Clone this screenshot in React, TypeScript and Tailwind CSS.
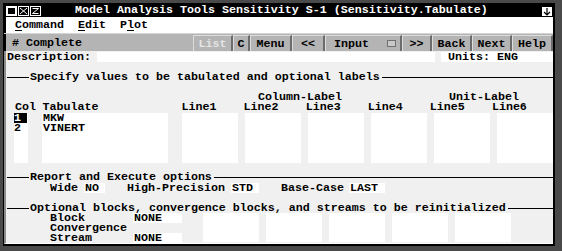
import React from "react";

const mono = "font-['Liberation_Mono',monospace] font-bold text-[11.67px] leading-[10px]";

interface BtnProps {
  label: string;
  w: string;
  disabled?: boolean;
  box?: boolean;
}

const Btn = ({ label, w, disabled, box }: BtnProps) => (
  <div
    className={`h-full flex items-center bg-[#b4b4b4] border-l border-t border-l-[#dcdcdc] border-t-[#dcdcdc] border-r-2 border-r-[#6c6c6c] ${box ? "justify-start pl-[8px]" : "justify-center"} ${w} ${disabled ? "text-[#e4e4e4]" : "text-black"}`}
  >
    <span>{label}</span>
    {box && <span className="ml-auto mr-[4px] w-[9px] h-[7px] border border-[#707070] bg-[#c8c8c8]" />}
  </div>
);

const Section = ({ title, className }: { title: string; className?: string }) => (
  <div className={`flex items-center h-[10px] ${className ?? ""}`}>
    <div className="w-[22px] h-px bg-black" />
    <span className="pl-px pr-[2px]">{title}</span>
    <div className="flex-1 h-px bg-black" />
  </div>
);

const Field = ({ text, className }: { text?: string; className: string }) => (
  <div className={`h-[10px] bg-white pl-px ${className}`}>{text}</div>
);

export default function App() {
  const lines = ["Line1", "Line2", "Line3", "Line4", "Line5", "Line6"];

  return (
    <div className={`w-[562px] h-[251px] bg-[#4a4a4a] pt-[3px] pl-[3px] overflow-hidden ${mono}`}>
      <div className="w-[552px] h-[243px] flex flex-col border-l border-black border-r-2 border-b-2 bg-black">
        {/* title bar */}
        <div className="h-[14px] bg-black flex items-end text-white">
          <div className="flex items-end h-full pb-px pl-[2px] gap-px">
            <svg width="11" height="10" viewBox="0 0 11 10">
              <rect x="0" y="0" width="11" height="10" fill="white" />
              <rect x="2" y="2" width="7" height="6" fill="black" />
            </svg>
            <svg width="11" height="10" viewBox="0 0 11 10">
              <rect x="0.5" y="0.5" width="10" height="9" fill="black" stroke="white" />
              <path d="M2 2 L9 8 M9 2 L2 8" stroke="white" strokeWidth="1" />
            </svg>
            <svg width="11" height="10" viewBox="0 0 11 10">
              <rect x="0.5" y="0.5" width="10" height="9" fill="black" stroke="white" />
              <path d="M2.5 2.5 H8.5 L2.5 7.5 H8.5" stroke="white" strokeWidth="1" fill="none" />
            </svg>
          </div>
          <span className="ml-[34px] pb-[2px]">Model Analysis Tools Sensitivity S-1 (Sensitivity.Tabulate)</span>
          <div className="ml-auto mr-[1px] mb-[1px] w-[10px] h-[9px] bg-white flex items-center justify-center">
            <svg width="8" height="8" viewBox="0 0 8 8">
              <path d="M4 0 V7 M1 4 L4 7 L7 4" stroke="black" strokeWidth="1.2" fill="none" />
            </svg>
          </div>
        </div>

        {/* menu bar */}
        <div className="h-[16px] bg-white flex items-center pl-[9px] border-l-2 border-black text-black">
          <span><span className="underline underline-offset-2">C</span>ommand</span>
          <span className="ml-[14px]"><span className="underline underline-offset-2">E</span>dit</span>
          <span className="ml-[14px]">P<span className="underline underline-offset-2">l</span>ot</span>
        </div>
        <div className="h-px bg-[#d4d4d4]" />

        {/* toolbar */}
        <div className="h-[17px] bg-[#b4b4b4] flex items-stretch border-l-2 border-black">
          <span className="pl-[6px] self-center">{"# Complete"}</span>
          <div className="ml-auto flex h-full pt-px">
            <Btn label="List" w="w-[40px]" disabled />
            <Btn label="C" w="w-[17px]" />
            <Btn label="Menu" w="w-[42px]" />
            <Btn label="<<" w="w-[33px]" />
            <Btn label="Input" w="w-[77px]" box />
            <Btn label=">>" w="w-[30px]" />
            <Btn label="Back" w="w-[40px]" />
            <Btn label="Next" w="w-[40px]" />
            <Btn label="Help" w="w-[41px]" />
          </div>
        </div>

        {/* content */}
        <div className="flex-1 bg-[#f0f0f0] border-l-2 border-l-[#8c8c8c] border-b border-b-white pl-px text-black flex flex-col">
          <div className="mt-px h-[10px] flex">
            <span>Description:</span>
            <div className="ml-[6px] w-[338px] bg-white" />
            <div className="ml-[6px] flex-1 bg-white pl-[7px]">Units: ENG</div>
          </div>

          <Section title="Specify values to be tabulated and optional labels" className="mt-[10px]" />

          <div className="mt-[10px] h-[10px] flex">
            <span className="ml-[251px]">Column-Label</span>
            <span className="ml-[107px]">Unit-Label</span>
          </div>
          <div className="h-[10px] flex">
            <span className="ml-[8px] w-[28px]">Col</span>
            <span className="w-[140px]">Tabulate</span>
            {lines.map((l) => (
              <span key={l} className="w-[63px] pl-px">{l}</span>
            ))}
          </div>

          <div className="mt-px h-[50px] flex">
            <div className="ml-[7px] w-[14px] bg-white">
              <div className="h-[10px] w-[13px] bg-black text-white">1</div>
              <div className="h-[10px]">2</div>
            </div>
            <div className="ml-[14px] w-[126px] bg-white pl-px">
              <div className="h-[10px]">MKW</div>
              <div className="h-[10px]">VINERT</div>
            </div>
            <div className="ml-[14px] flex gap-[7px]">
              {lines.map((l) => (
                <div key={l} className="w-[56px] h-full bg-white" />
              ))}
            </div>
          </div>

          <Section title="Report and Execute options" className="mt-[9px]" />

          <div className="mt-px h-[10px] flex">
            <span className="ml-[43px]">Wide</span>
            <Field text="NO" className="ml-[6px] w-[21px]" />
            <span className="ml-[22px]">High-Precision</span>
            <Field text="STD" className="ml-[6px] w-[28px]" />
            <span className="ml-[22px]">Base-Case</span>
            <Field text="LAST" className="ml-[5px] w-[36px]" />
          </div>

          <Section title="Optional blocks, convergence blocks, and streams to be reinitialized" className="mt-[10px]" />

          <div className="flex">
            <div className="flex flex-col">
              <div className="h-[10px] flex">
                <span className="ml-[43px] w-[83px]">Block</span>
                <Field text="NONE" className="w-[49px]" />
              </div>
              <div className="h-[10px] flex">
                <span className="ml-[43px] w-[83px]">Convergence</span>
              </div>
              <div className="h-[10px] flex">
                <span className="ml-[43px] w-[83px]">Stream</span>
                <Field text="NONE" className="w-[49px]" />
              </div>
            </div>
            <div className="ml-[21px] flex gap-[7px] h-[29px]">
              {[0, 1, 2, 3, 4].map((i) => (
                <div key={i} className="w-[56px] h-full bg-white" />
              ))}
            </div>
          </div>
        </div>
      </div>
    </div>
  );
}
